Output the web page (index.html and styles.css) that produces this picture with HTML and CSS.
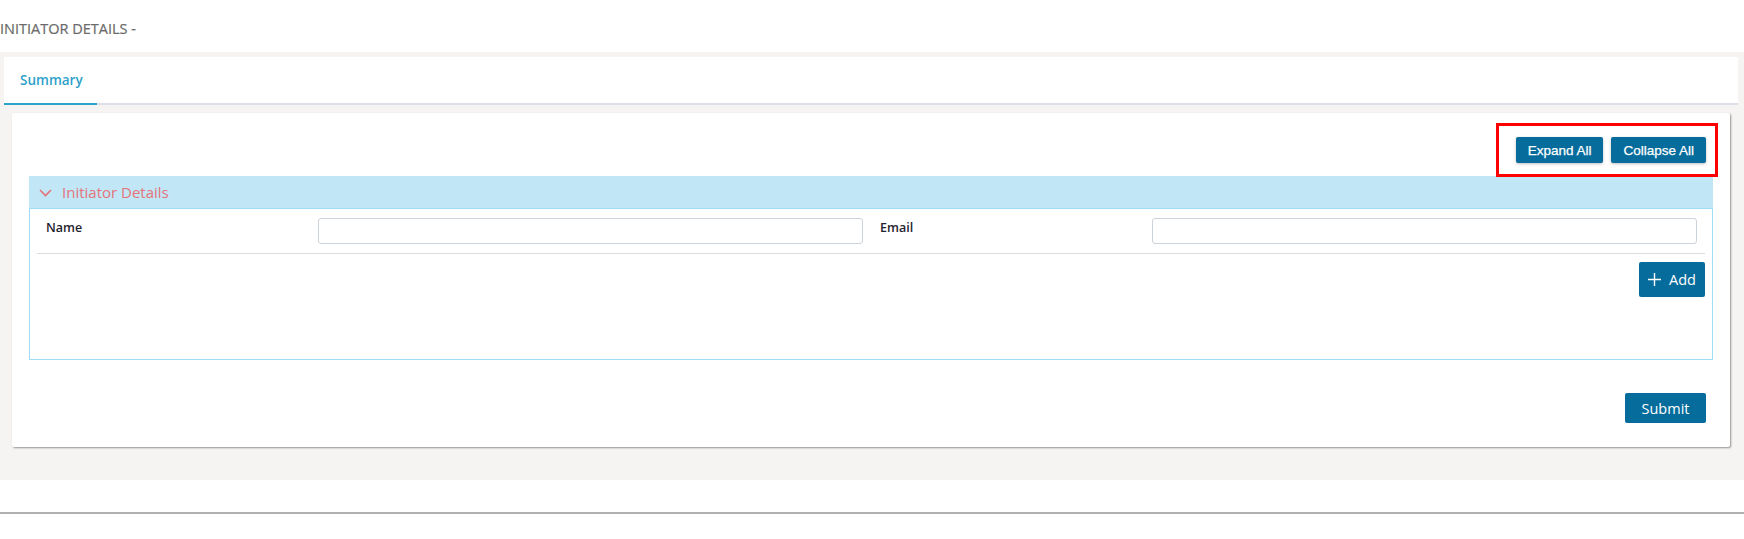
FILE: index.html
```html
<!DOCTYPE html>
<html lang="en">
<head>
<meta charset="utf-8">
<title>Initiator Details</title>
<link rel="stylesheet" href="styles.css">
</head>
<body>
<div class="page">
  <h1 class="page-title">INITIATOR DETAILS -</h1>
  <div class="workspace">
    <div class="tabs">
      <div class="tab tab-active">Summary</div>
    </div>
    <div class="card">
      <div class="toolbar">
        <div class="highlight">
          <button class="btn btn-sm" type="button">Expand All</button>
          <button class="btn btn-sm" type="button">Collapse All</button>
        </div>
      </div>
      <div class="accordion">
        <div class="accordion-header">
          <svg class="chevron" width="13" height="8" viewBox="0 0 13 8"><path d="M1 1 L6.5 6.5 L12 1" fill="none" stroke="#e5737a" stroke-width="1.6"/></svg>
          <span class="accordion-title">Initiator Details</span>
        </div>
        <div class="accordion-body">
          <div class="form-row">
            <label class="field-label">Name</label>
            <div class="field-control"><input class="text-input" type="text"></div>
            <label class="field-label">Email</label>
            <div class="field-control"><input class="text-input" type="text"></div>
          </div>
          <div class="add-row">
            <button class="btn btn-add" type="button">
              <svg class="plus" width="13" height="13" viewBox="0 0 13 13"><path d="M6.5 0 V13 M0 6.5 H13" stroke="#fff" stroke-width="1.4"/></svg>
              <span>Add</span>
            </button>
          </div>
        </div>
      </div>
      <div class="actions">
        <button class="btn btn-submit" type="button">Submit</button>
      </div>
    </div>
  </div>
  <div class="footer-line"></div>
</div>
</body>
</html>
```
FILE: styles.css
```css
* { box-sizing: border-box; }
html, body { margin: 0; padding: 0; background: #fff; }
body { font-family: "Open Sans", "Noto Sans", sans-serif; color: #222; }

.page { width: 1744px; }

.page-title {
  margin: 0;
  height: 52px;
  padding-top: 18px;
  font-size: 14.5px;
  font-weight: 400;
  line-height: 22px;
  color: #6a6a6a;
  -webkit-text-stroke: 0.2px #6a6a6a;
}

.workspace {
  background: #f5f4f2;
  padding: 5px 6px 33px 4px;
}

.tabs {
  background: #fff;
  height: 48px;
  border-bottom: 2px solid #dde1e7;
  display: flex;
}
.tab {
  padding: 0 16px;
  font-size: 13.5px;
  font-weight: 600;
  line-height: 46px;
  color: #2d9fc9;
}
.tab-active {
  width: 93px;
  border-bottom: 2px solid #2aa4cd;
  margin-bottom: -2px;
}

.card {
  background: #fff;
  margin: 8px 8px 0 8px;
  height: 334px;
  padding: 10px 17px 0 17px;
  box-shadow: 1px 1px 2px rgba(0,0,0,0.4);
  border-radius: 2px;
}

.toolbar {
  display: flex;
  justify-content: flex-end;
  margin-right: -5px;
}
.highlight {
  border: 3px solid #f00;
  padding: 11px 9px 11px 17px;
  display: flex;
  gap: 8px;
}

.btn {
  border: 0;
  background: #066c9c;
  color: #fff;
  cursor: pointer;
  border-radius: 2px;
}
.btn-sm {
  height: 26px;
  padding: 0 12px;
  font-family: "Liberation Sans", Arial, sans-serif;
  font-size: 13.5px;
  -webkit-text-stroke: 0.25px #fff;
  box-shadow: 0 1px 3px rgba(0,0,0,0.25);
}

.accordion { margin-top: -1px; }
.accordion-header {
  height: 32px;
  background: #c1e6f6;
  display: flex;
  align-items: center;
  padding-left: 10px;
}
.chevron { margin-right: 10px; margin-top: 1px; }
.accordion-title {
  font-size: 15px;
  color: #e5737a;
}

.accordion-body {
  border: 1px solid #9fdcf6;
  height: 152px;
  padding: 0 7px;
}
.form-row {
  display: grid;
  grid-template-columns: 1fr 2fr 1fr 2fr;
  align-items: center;
  height: 45px;
  border-bottom: 1px solid #dadde0;
}
.field-label {
  font-size: 12.5px;
  font-weight: 600;
  color: #1f2330;
  padding-left: 9px;
  margin-top: -7px;
}
.field-control { padding: 0 8px 0 3px; }
.text-input {
  display: block;
  width: 100%;
  height: 26px;
  border: 1px solid #cdd3da;
  border-radius: 3px;
  background: #fff;
}

.add-row {
  display: flex;
  justify-content: flex-end;
  padding-top: 8px;
}
.btn-add {
  height: 35px;
  width: 66px;
  display: flex;
  align-items: center;
  justify-content: center;
  gap: 8px;
  font-family: "Open Sans", sans-serif;
  font-size: 14.5px;
  padding: 0;
}

.actions {
  display: flex;
  justify-content: flex-end;
  padding: 33px 7px 0 0;
}
.btn-submit {
  height: 30px;
  width: 81px;
  font-family: "Open Sans", sans-serif;
  font-size: 14.5px;
  padding: 0;
}

.footer-line {
  margin-top: 32px;
  height: 2px;
  background: #b0b0b0;
}
```
